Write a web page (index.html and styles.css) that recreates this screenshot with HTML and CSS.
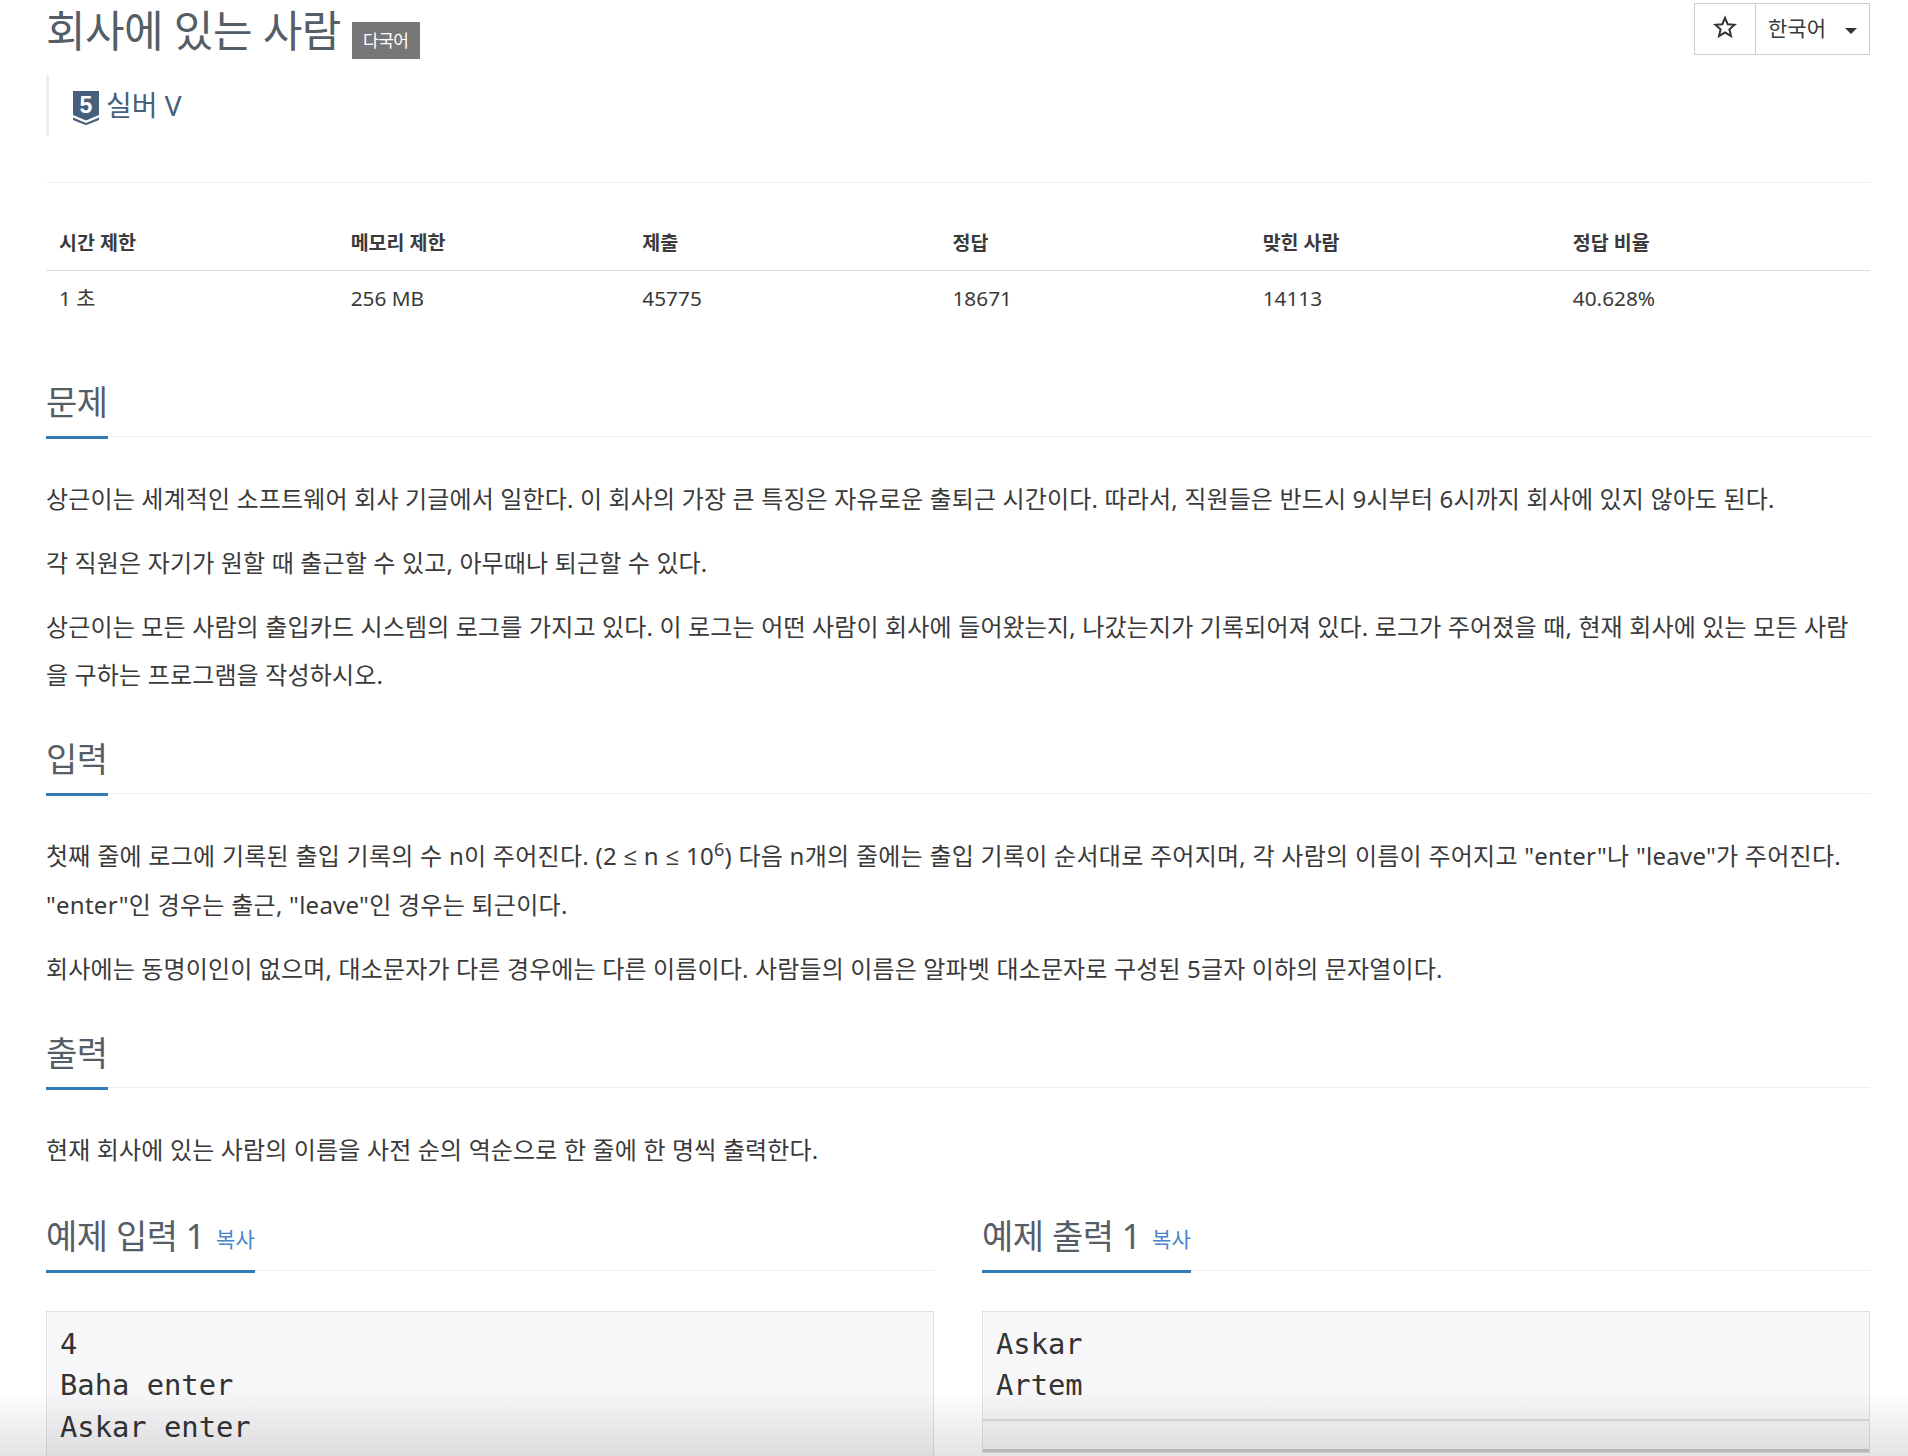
FILE: index.html
```html
<!DOCTYPE html>
<html lang="ko">
<head>
  <meta charset="UTF-8">
  <meta name="viewport" content="width=device-width, initial-scale=1.0">
  <title>회사에 있는 사람</title>
  <link rel="stylesheet" href="styles.css">
</head>
<body>
  <div class="wrapper">
    <div class="page-header">
      <div class="title-row">
        <h1 class="title">회사에 있는 사람</h1>
        <span class="label">다국어</span>
        <div class="btn-group">
          <span class="btn btn-star">
            <svg width="24" height="24" viewBox="0 0 24 24"><path d="M12 2.8l2.7 6.4 6.9.6-5.2 4.5 1.6 6.8-6-3.6-6 3.6 1.6-6.8-5.2-4.5 6.9-.6z" fill="none" stroke="#333" stroke-width="2"/></svg>
          </span>
          <span class="btn btn-lang">한국어<i class="caret"></i></span>
        </div>
      </div>
      <blockquote class="tier">
        <svg class="tier-icon" width="26" height="34" viewBox="0 0 26 34">
          <path d="M0 0h26v24l-13 5.5L0 24z" fill="#46607b"/>
          <path d="M0 26.5l13 5.5 13-5.5V29l-13 5.2L0 29z" fill="#46607b"/>
          <text x="13" y="22" class="tier-num">5</text>
        </svg>
        <span>실버 V</span>
      </blockquote>
    </div>

    <table class="info">
      <thead>
        <tr>
          <th class="col-a">시간 제한</th>
          <th class="col-a">메모리 제한</th>
          <th>제출</th>
          <th>정답</th>
          <th>맞힌 사람</th>
          <th>정답 비율</th>
        </tr>
      </thead>
      <tbody>
        <tr>
          <td>1 초</td>
          <td>256 MB</td>
          <td>45775</td>
          <td>18671</td>
          <td>14113</td>
          <td>40.628%</td>
        </tr>
      </tbody>
    </table>

    <section class="section">
      <div class="headline"><h2>문제</h2></div>
      <p>상근이는 세계적인 소프트웨어 회사 기글에서 일한다. 이 회사의 가장 큰 특징은 자유로운 출퇴근 시간이다. 따라서, 직원들은 반드시 9시부터 6시까지 회사에 있지 않아도 된다.</p>
      <p>각 직원은 자기가 원할 때 출근할 수 있고, 아무때나 퇴근할 수 있다.</p>
      <p>상근이는 모든 사람의 출입카드 시스템의 로그를 가지고 있다. 이 로그는 어떤 사람이 회사에 들어왔는지, 나갔는지가 기록되어져 있다. 로그가 주어졌을 때, 현재 회사에 있는 모든 사람을 구하는 프로그램을 작성하시오.</p>
    </section>

    <section class="section">
      <div class="headline"><h2>입력</h2></div>
      <p class="wide">첫째 줄에 로그에 기록된 출입 기록의 수 n이 주어진다. (2 <span class="math">≤</span> n <span class="math">≤</span> 10<sup>6</sup>) 다음 n개의 줄에는 출입 기록이 순서대로 주어지며, 각 사람의 이름이 주어지고 "enter"나 "leave"가 주어진다. "enter"인 경우는 출근, "leave"인 경우는 퇴근이다.</p>
      <p>회사에는 동명이인이 없으며, 대소문자가 다른 경우에는 다른 이름이다. 사람들의 이름은 알파벳 대소문자로 구성된 5글자 이하의 문자열이다.</p>
    </section>

    <section class="section">
      <div class="headline"><h2>출력</h2></div>
      <p>현재 회사에 있는 사람의 이름을 사전 순의 역순으로 한 줄에 한 명씩 출력한다.</p>
    </section>

    <div class="samples">
      <div class="sample">
        <div class="headline"><h2>예제 입력 1 <a class="copy">복사</a></h2></div>
        <pre class="sample-data">4
Baha enter
Askar enter
Baha leave
Artem enter</pre>
      </div>
      <div class="sample">
        <div class="headline"><h2>예제 출력 1 <a class="copy">복사</a></h2></div>
        <pre class="sample-data">Askar
Artem
<span class="scroll-bar"></span></pre>
      </div>
    </div>
  </div>
  <div class="fade"></div>
</body>
</html>
```

FILE: styles.css
```css
html, body {
  margin: 0;
  height: 1456px;
  overflow: hidden;
  background: #fff;
}
body {
  font-family: "Noto Sans", "Noto Sans CJK KR", sans-serif;
  font-size: 24px;
  line-height: 48.6px;
  color: #3a3a3a;
  letter-spacing: 0.15px;
}
.wrapper {
  margin: 0 38px 0 46px;
}
.page-header {
  height: 182px;
  border-bottom: 1px solid #eee;
}
.title-row {
  display: flex;
  align-items: flex-start;
  height: 75px;
}
.title {
  margin: 0;
  font-size: 43px;
  font-weight: 400;
  line-height: 62px;
  color: #555d66;
  letter-spacing: -0.5px;
}
.label {
  margin: 22px 0 0 11px;
  width: 68px;
  height: 37px;
  background: #777;
  color: #fff;
  font-size: 17px;
  line-height: 37px;
  text-align: center;
  letter-spacing: -0.5px;
}
.btn-group {
  margin-left: auto;
  margin-top: 3px;
  height: 50px;
  display: flex;
  border: 1px solid #ccc;
  font-size: 21px;
  letter-spacing: 0;
}
.btn {
  display: flex;
  align-items: center;
}
.btn-star {
  width: 61px;
  justify-content: center;
  border-right: 1px solid #ccc;
  padding-bottom: 5px;
  padding-right: 1px;
  box-sizing: border-box;
}
.btn-lang {
  width: 113px;
  padding-left: 12px;
  padding-bottom: 2px;
  box-sizing: border-box;
}
.caret {
  margin: 5px 0 0 19px;
  border-top: 6px solid #333;
  border-left: 6px solid transparent;
  border-right: 6px solid transparent;
}
.tier {
  margin: 0;
  height: 61px;
  border-left: 3px solid #eee;
  padding-left: 24px;
  display: flex;
  align-items: center;
  gap: 7px;
  font-size: 28px;
  color: #46607b;
  letter-spacing: 0;
}
.tier-icon {
  margin-top: 4px;
}
.tier-num {
  font-family: "Liberation Sans", sans-serif;
  font-size: 23px;
  font-weight: 700;
  fill: #fff;
  text-anchor: middle;
}
.info {
  width: 100%;
  margin: 24px 0 53.8px;
  border-collapse: collapse;
  table-layout: fixed;
  font-size: 20.8px;
  letter-spacing: 0;
}
.info th, .info td {
  box-sizing: border-box;
  padding: 9px 13px 8px;
  text-align: left;
  line-height: 37px;
}
.info th {
  font-weight: 700;
  border-bottom: 1px solid #ddd;
  width: 310px;
  padding: 17px 13px 9px;
  font-size: 19.5px;
}
.info th.col-a {
  width: 291.5px;
}
.section {
  margin-top: 36.4px;
}
.info + .section {
  margin-top: 0;
}
.headline {
  border-bottom: 1px solid #eee;
  height: 57px;
  margin-bottom: 38px;
}
.headline h2 {
  display: inline-block;
  margin: 0;
  height: 57px;
  border-bottom: 3px solid #337ab7;
  font-size: 34px;
  font-weight: 400;
  line-height: 46px;
  color: #555d66;
  letter-spacing: -0.5px;
}
.section p {
  margin: 0 0 15.3px;
}
.section p.wide {
  letter-spacing: 0.26px;
}
.math {
  font-family: "Open Sans", sans-serif;
}
sup {
  font-size: 18px;
  line-height: 0;
}
.samples {
  display: flex;
  gap: 48px;
  margin-top: 38.5px;
}
.sample {
  flex: 1;
  min-width: 0;
}
.sample .headline {
  margin-bottom: 40px;
}
.copy {
  font-size: 21px;
  color: #4a85c9;
  letter-spacing: 0;
  margin-left: 3px;
  position: relative;
  top: -2px;
}
.sample-data {
  margin: 0;
  padding: 12px 13px;
  background: #f7f7f9;
  border: 1px solid #e1e1e8;
  font-family: "DejaVu Sans Mono", monospace;
  font-size: 28.8px;
  line-height: 41.7px;
  letter-spacing: 0;
  color: #333;
}
.scroll-bar {
  display: block;
  height: 28px;
  margin: 12px -13px -12px;
  border-top: 2px solid #ddd;
  border-bottom: 3px solid #ccc;
}
.fade {
  position: absolute;
  left: 0;
  right: 0;
  top: 1390px;
  height: 66px;
  background: linear-gradient(rgba(0, 0, 0, 0), rgba(0, 0, 0, 0.11));
}
```
